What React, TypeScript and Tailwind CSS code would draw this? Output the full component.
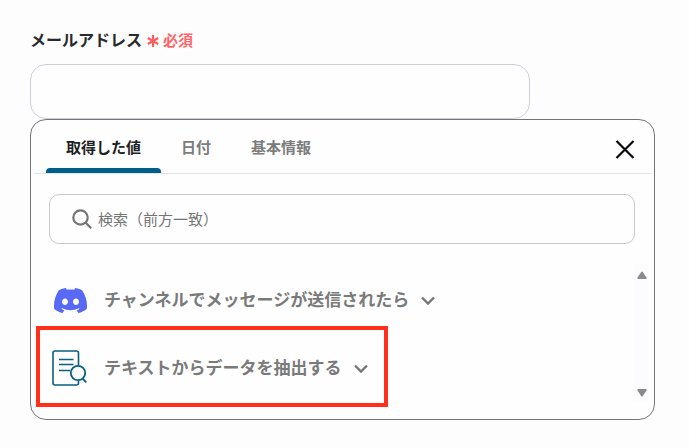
import { useState } from "react";
import type { ReactNode } from "react";
import { SiDiscord } from "react-icons/si";

const tabs = [
  { id: "values", label: "取得した値" },
  { id: "date", label: "日付" },
  { id: "basic", label: "基本情報" },
];

function DocumentSearchIcon() {
  return (
    <svg viewBox="0 0 36 38" className="h-[38px] w-9" fill="none" stroke="#0a5f80" aria-hidden="true">
      <path d="M26.500 16V4a2 2 0 0 0-2-2H3a2 2 0 0 0-2 2v30a2 2 0 0 0 2 2h21.500a2 2 0 0 0 2-2v-2.500" strokeWidth="1.6" />
      <path d="M7 10.500h14.500M7 15.500h14.500M7 21.500h11" strokeWidth="1.5" />
      <circle cx="26" cy="24" r="7.200" strokeWidth="1.8" />
      <path d="m30.500 29.500 3.800 3.800" strokeWidth="1.800" />
    </svg>
  );
}

function ChevronIcon() {
  return (
    <svg viewBox="0 0 14 10" className="h-[10px] w-[14px]" fill="none" stroke="#757575" strokeWidth="2.3" aria-hidden="true">
      <path d="m1 1.500 6 6 6-6" />
    </svg>
  );
}

function SourceRow({ icon, label, highlighted = false }: { icon: ReactNode; label: string; highlighted?: boolean }) {
  return (
    <li>
      <button
        type="button"
        aria-expanded={false}
        className="relative flex h-[68px] items-center pr-5 text-[17px] font-bold whitespace-nowrap text-[#7a7a7a]"
      >
        <span className="flex w-9 justify-center">{icon}</span>
        <span className="ml-4 pb-0.5">{label}</span>
        <span className="ml-3 pt-0.5">
          <ChevronIcon />
        </span>
        {highlighted && (
          <span className="pointer-events-none absolute -top-2 right-0 -bottom-[5px] -left-4 border-4 border-[#ff2f1c]" />
        )}
      </button>
    </li>
  );
}

export default function App() {
  const [active, setActive] = useState("values");

  return (
    <main className="min-h-screen bg-[#fdfdfd] pt-[27px] pr-[34px] pb-7 pl-[30px] font-['Noto_Sans_CJK_JP',sans-serif]">
      <div className="flex h-6 items-center">
        <label htmlFor="email" className="text-base font-semibold text-[#2a2a2e]">
          メールアドレス
        </label>
        <span className="ml-[5px] flex items-center gap-1 pt-0.5 text-[15px] font-bold text-[#ff6468]">
          <svg viewBox="0 0 12 12" className="mt-0.5 size-3" stroke="#ff5c60" strokeWidth="2.1" aria-hidden="true">
            <path d="M6 0v12M.8 3l10.400 6M11.200 3 .8 9" />
          </svg>
          必須
        </span>
      </div>
      <input
        id="email"
        type="email"
        className="mt-[13px] block h-[55px] w-full max-w-[500px] rounded-2xl border border-[#cfcfdc] bg-[#fefefe] px-4 text-base outline-none"
      />

      <section className="rounded-2xl border border-[#757575] bg-[#fefefe] pb-[17px]">
        <div className="mx-[3px] flex h-[54px] items-stretch justify-between border-b border-[#dfe5ea] pl-3">
          <div role="tablist" className="flex">
            {tabs.map((tab) => (
              <button
                key={tab.id}
                type="button"
                role="tab"
                aria-selected={active === tab.id}
                onClick={() => setActive(tab.id)}
                className={
                  active === tab.id
                    ? "flex flex-col items-center text-[15px] font-bold text-[#1f1f24]"
                    : "flex flex-col items-center text-[15px] font-bold text-[#7c7c7c]"
                }
              >
                <span className="flex flex-1 items-center px-5 pt-1.5">{tab.label}</span>
                <span className={active === tab.id ? "h-[5px] w-full rounded-t bg-[#005f85]" : "h-[5px] w-full"} />
              </button>
            ))}
          </div>
          <button type="button" aria-label="閉じる" className="mt-1 mr-4 flex items-center">
            <svg viewBox="0 0 20 20" className="size-5" fill="none" stroke="#08080c" strokeWidth="2.200" aria-hidden="true">
              <path d="m1.500 2 17 17M18.500 2l-17 17" />
            </svg>
          </button>
        </div>

        <label className="mx-[18px] mt-5 mr-[19px] flex h-[50px] items-center gap-1.5 rounded-[10px] border border-[#cacaca] px-[22px]">
          <svg viewBox="0 0 20 20" className="size-5 shrink-0" fill="none" stroke="#757575" strokeWidth="2.200" aria-hidden="true">
            <circle cx="8.500" cy="8.500" r="7.200" />
            <path d="m13.500 13.500 5.700 5.700" />
          </svg>
          <input
            type="text"
            aria-label="検索（前方一致）"
            placeholder="検索（前方一致）"
            className="min-w-0 flex-1 bg-transparent text-[15px] outline-none placeholder:text-[#757575]"
          />
        </label>

        <div className="mt-5 mr-[5px] ml-[21px] flex justify-between">
          <ul className="pt-0.5">
            <SourceRow icon={<SiDiscord className="size-[33px] text-[#5869f6]" />} label="チャンネルでメッセージが送信されたら" />
            <SourceRow icon={<DocumentSearchIcon />} label="テキストからデータを抽出する" highlighted />
          </ul>
          <div className="flex w-[15px] flex-col items-center justify-between bg-[#fcfbfd] pt-[7px] pb-[5px]" aria-hidden="true">
            <svg viewBox="0 0 10 8" className="h-2 w-[10px]" fill="#8b8b8b">
              <path d="M4.200 1Q5 0 5.800 1L9.500 6.500Q10 8 9 8H1Q0 8 .5 6.500Z" />
            </svg>
            <svg viewBox="0 0 10 8" className="h-2 w-[10px]" fill="#8b8b8b">
              <path d="M4.200 7Q5 8 5.800 7L9.500 1.500Q10 0 9 0H1Q0 0 .5 1.500Z" />
            </svg>
          </div>
        </div>
      </section>
    </main>
  );
}
